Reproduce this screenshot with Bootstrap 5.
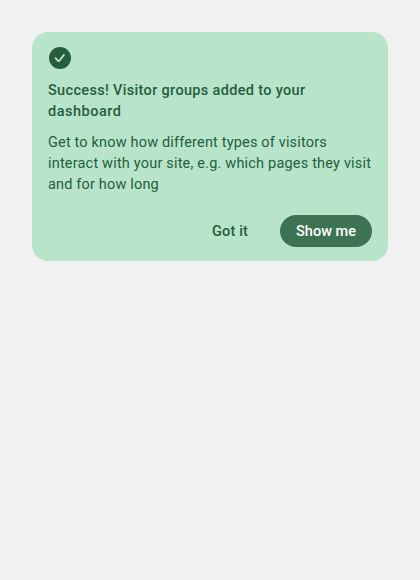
<!DOCTYPE html>
<html lang="en">
<head>
<meta charset="utf-8">
<meta name="viewport" content="width=device-width, initial-scale=1">
<title>Visitor groups</title>
<link rel="stylesheet" href="https://cdn.jsdelivr.net/npm/bootstrap@5.3.0/dist/css/bootstrap.min.css">
<style>
body{background:#f1f1f1;font:400 14.5px/21px Roboto,sans-serif;padding:32px}
.notice{background:#b8e5ca;border:0;border-radius:16px;padding:14px 16px;height:229px;color:#265d3c}
.notice-icon{width:24px;height:24px;display:block}
.notice-title{font-size:14.5px;line-height:21px;font-weight:500;margin:10px 0 10px}
.notice-title span,.notice-text span{display:block;white-space:nowrap;width:max-content}
.t1{letter-spacing:.33px}
.t2{letter-spacing:.5px}
.p1,.p3{letter-spacing:.17px}
.p2{letter-spacing:.19px}
.notice .btn{font-size:14.5px;line-height:20px;font-weight:500;height:32px;padding:7px 16px 5px;border:0;border-radius:16px;color:#265d3c;white-space:nowrap;letter-spacing:.03px}
.notice .btn-quiet{letter-spacing:.15px}
.notice .btn-main{background:#3d7352;color:#fff;width:92px}
</style>
</head>
<body>
<div class="notice card">
<svg class="notice-icon" viewBox="0 0 24 24" fill="none"><circle cx="12" cy="12" r="11" fill="#265d3c"/><path d="M7.5 12.2l2.6 2.7c.4.4.9.4 1.2-.1l4.6-5.9" stroke="#b8e5ca" stroke-width="1.8" stroke-linecap="round" stroke-linejoin="round"/></svg>
<h1 class="notice-title"><span class="t1">Success! Visitor groups added to your</span><span class="t2">dashboard</span></h1>
<p class="notice-text mb-0"><span class="p1">Get to know how different types of visitors</span><span class="p2">interact with your site, e.g. which pages they visit</span><span class="p3">and for how long</span></p>
<div class="d-flex justify-content-end gap-3 mt-auto"><button class="btn btn-quiet" type="button">Got it</button><button class="btn btn-main" type="button">Show me</button></div>
</div>
<script src="https://cdn.jsdelivr.net/npm/bootstrap@5.3.0/dist/js/bootstrap.bundle.min.js"></script>
</body>
</html>
